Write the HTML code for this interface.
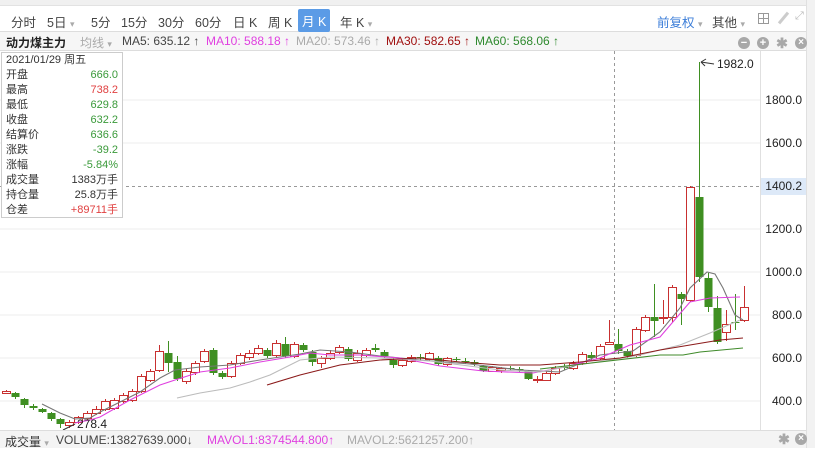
<!DOCTYPE html>
<html><head><meta charset="utf-8">
<style>
*{margin:0;padding:0;box-sizing:border-box}
body{width:815px;height:448px;overflow:hidden;background:#fff;font-family:"Liberation Sans","Noto Sans CJK SC",sans-serif;font-size:12px;color:#333;position:relative}
.topstrip{position:absolute;left:0;top:0;width:815px;height:6px;background:#f0f0f0;border-bottom:1px solid #e2e2e2}
.bar1{position:absolute;left:0;top:6px;width:806px;height:26px;background:#fff;border-bottom:1px solid #ddd}
.bar1 span{position:absolute;top:6px;font-size:12.5px;color:#444}
.bar2{position:absolute;left:0;top:32px;width:806px;height:19px;background:#f6f6f6;border-bottom:1px solid #ddd;white-space:nowrap}
.bar2 span{position:absolute;top:2px;font-size:12px}
.rscroll{position:absolute;left:806px;top:0;width:9px;height:448px;background:#f2f2f2;border-left:1px solid #e0e0e0}
.tip{position:absolute;left:1px;top:52px;width:122px;height:166px;background:#fff;border:1px solid #ccc;font-size:11px}
.tip div{height:15px;line-height:15px;padding:0 4px;position:relative}
.tip b{font-weight:normal;position:absolute;right:4px}
.g{color:#3a9a3a}.r{color:#e04040}
.bot{position:absolute;left:0;top:430px;width:806px;height:18px;background:#f4f4f4;border-top:1px solid #ddd;white-space:nowrap}
.bot span{position:absolute;top:2px;font-size:12px}
.ico{position:absolute;width:12px;height:12px;border-radius:50%;background:#a8a8a8;color:#fff;font-size:11px;line-height:12px;text-align:center;font-weight:bold}
</style></head><body>
<div class="topstrip"></div>
<div class="rscroll"></div>
<div class="bar1">
<span style="left:11px">分时</span>
<span style="left:47px">5日 <i style="font-style:normal;color:#aaa;font-size:9px">▾</i></span>
<span style="left:91px">5分</span>
<span style="left:121px">15分</span>
<span style="left:158px">30分</span>
<span style="left:195px">60分</span>
<span style="left:233px">日 K</span>
<span style="left:268px">周 K</span>
<span style="left:298px;top:3px;background:#5b9be6;color:#fff;padding:2px 4px;border-radius:2px">月 K</span>
<span style="left:340px">年 K <i style="font-style:normal;color:#aaa;font-size:9px">▾</i></span>
<span style="left:657px;color:#3b7dd8">前复权 <i style="font-style:normal;color:#aaa;font-size:9px">▾</i></span>
<span style="left:712px">其他 <i style="font-style:normal;color:#aaa;font-size:9px">▾</i></span>
<span style="left:758px;top:7px;width:11px;height:11px;border:1px solid #999;background:linear-gradient(#999,#999) 4px 0/1px 100% no-repeat,linear-gradient(#999,#999) 0 4px/100% 1px no-repeat"></span>
<span style="left:782px;top:5px;width:3px;height:14px;background:#ccc;transform:rotate(40deg)"></span>
<span style="left:795px;top:4px;color:#bbb;font-size:11px">⤢</span>
</div>
<div class="bar2">
<span style="left:6px;font-weight:bold;color:#222">动力煤主力</span>
<span style="left:80px;color:#aaa">均线 <i style="font-style:normal;font-size:9px">▾</i></span>
<span style="left:122px;color:#444">MA5: 635.12 ↑</span>
<span style="left:206px;color:#e040e0">MA10: 588.18 ↑</span>
<span style="left:296px;color:#aaa">MA20: 573.46 ↑</span>
<span style="left:386px;color:#a01010">MA30: 582.65 ↑</span>
<span style="left:475px;color:#2f8a2f">MA60: 568.06 ↑</span>
</div>
<div class="ico" style="left:738px;top:37px">−</div>
<div class="ico" style="left:757px;top:37px">+</div>
<div class="ico" style="left:776px;top:37px;background:none;color:#a8a8a8;font-size:14px">✱</div>
<div class="ico" style="left:795px;top:37px;font-size:10px">×</div>
<svg id="c" width="815" height="448" style="position:absolute;left:0;top:0" xmlns="http://www.w3.org/2000/svg"></svg>
<div class="tip">
<div>2021/01/29 周五</div>
<div>开盘<b class="g">666.0</b></div>
<div>最高<b class="r">738.2</b></div>
<div>最低<b class="g">629.8</b></div>
<div>收盘<b class="g">632.2</b></div>
<div>结算价<b class="g">636.6</b></div>
<div>涨跌<b class="g">-39.2</b></div>
<div>涨幅<b class="g">-5.84%</b></div>
<div>成交量<b>1383万手</b></div>
<div>持仓量<b>25.8万手</b></div>
<div>仓差<b class="r">+89711手</b></div>
</div>
<div class="bot">
<span style="left:5px">成交量 <i style="font-style:normal;color:#aaa;font-size:9px">▾</i></span>
<span style="left:56px;color:#444">VOLUME:13827639.000↓</span>
<span style="left:207px;color:#e040e0">MAVOL1:8374544.800↑</span>
<span style="left:347px;color:#aaa">MAVOL2:5621257.200↑</span>
</div>
<div class="ico" style="left:778px;top:433px;background:none;color:#a8a8a8;font-size:14px">✱</div>
<div class="ico" style="left:795px;top:433px;font-size:10px">×</div>
<script>
var s=document.getElementById('c'),h='';
[100,143,229,272,315,358,401].forEach(function(y){h+='<line x1="0" x2="760" y1="'+y+'" y2="'+y+'" stroke="#eeeeee"/>';});
h+='<line x1="760.5" x2="760.5" y1="51" y2="430" stroke="#e0e0e0"/>';
h+='<line x1="614.5" x2="614.5" y1="51" y2="430" stroke="#999" stroke-dasharray="3,3"/>';
h+='<line x1="0" x2="760" y1="186.5" y2="186.5" stroke="#999" stroke-dasharray="3,3"/>';
h+='<rect x="761" y="178" width="45" height="17" fill="#dde9f8"/>';
var lab=[[100,'1800.0'],[143,'1600.0'],[186,'1400.2'],[229,'1200.0'],[272,'1000.0'],[315,'800.0'],[358,'600.0'],[401,'400.0']];
lab.forEach(function(l){h+='<text x="802" y="'+(l[0]+4)+'" text-anchor="end" font-size="12" fill="#222" font-family="Liberation Sans">'+l[1]+'</text>';});
var d=[
['r',391,393,390,394],['g',393,397,392,399],['g',399,405,398,408],['g',406,408,404,410],['g',409,412,408,413],['g',413,419,412,421],['g',419,424,418,428],['r',422,425,420,428],['r',417,422,416,424],['r',413,418,411,420],
['r',409,413,406,415],['r',401,409,399,411],['r',400,408,398,410],['r',395,401,393,403],['r',391,400,389,402],['r',376,391,374,393],['r',371,380,369,382],['r',351,370,345,372],['g',353,363,341,372],['g',362,379,356,381],
['r',371,381,369,384],['r',363,372,361,375],['r',351,361,349,363],['g',350,373,348,375],['g',373,377,371,379],['r',363,376,361,378],['r',355,363,353,365],['r',353,357,350,360],['r',348,353,345,355],['g',350,356,348,358],
['r',343,355,340,357],['g',344,356,337,358],['r',344,356,342,358],['g',345,350,343,352],['g',352,362,350,366],['r',358,363,356,368],['r',353,358,350,360],['r',347,352,345,354],['g',349,359,347,361],['r',353,360,350,362],
['r',350,355,348,357],['g',348,350,344,352],['g',352,356,350,358],['g',360,365,358,368],['r',360,365,358,367],['r',357,361,355,363],['g',357,358,354,361],['r',353,359,352,361],['g',358,364,356,366],['r',358,364,357,366],
['g',359,360,357,362],['g',361,362,358,364],['g',362,364,360,366],['g',366,371,365,372],['r',367,371,366,372],['r',368,370,367,373],['g',368,369,366,371],['g',369,370,367,372],['g',371,379,370,380],['r',379,380,376,383],
['r',373,380,371,381],['r',368,373,366,375],['g',367,368,364,370],['r',363,368,361,370],['r',354,363,352,365],['g',355,358,352,360],['r',346,358,344,360],['r',342,344,320,345],['g',344,351,329,354],['g',351,356,349,358],
['r',329,355,327,357],['r',317,330,315,332],['g',317,321,284,337],['r',317,318,300,324],['r',287,317,285,322],['g',294,299,292,325],['r',187,300,186,302],['g',197,277,62,282],['g',278,307,273,312],['g',308,342,296,344],
['r',324,332,310,341],['g',322,323,294,330],['r',307,320,286,322]];
d.forEach(function(c,i){var x=6+9*i,col=c[0]=='r'?'#c83030':'#3f8f22';
h+='<line x1="'+(x+.5)+'" x2="'+(x+.5)+'" y1="'+c[3]+'" y2="'+c[4]+'" stroke="'+col+'"/>';
var hh=Math.max(1,c[2]-c[1]);
if(c[0]=='r')h+='<rect x="'+(x-3.5)+'" y="'+(c[1]+.5)+'" width="8" height="'+hh+'" fill="#fff" stroke="'+col+'"/>';
else h+='<rect x="'+(x-3.5)+'" y="'+c[1]+'" width="8" height="'+hh+'" fill="'+col+'"/>';});
function pl(p,col){h+='<polyline fill="none" stroke="'+col+'" stroke-width="1.1" points="'+p+'"/>';}
pl('42,404 60,413 75,419 90,418 100,412 120,402 140,392 160,378 175,370 200,367 230,365 260,360 300,354 320,350 350,352 380,356 420,360 470,364 520,370 560,372 600,355 633,351 660,332 680,308 690,288 707,272 715,274 723,288 735,315 743,320','#777');
pl('75,423 90,420 100,417 130,400 160,385 175,380 200,372 230,368 260,362 290,357 310,353 330,355 360,355 400,358 440,366 483,371 533,373 560,368 600,358 630,345 660,337 690,302 710,298 740,297','#e040e0');
pl('177,398 200,393 230,388 250,382 270,375 300,360 330,357 380,358 430,361 500,370 540,372 570,366 610,360 640,355 680,345 710,333 740,320','#bbbbbb');
pl('267,385 300,375 340,365 380,360 420,358 460,362 500,365 540,365 580,362 620,358 660,350 690,345 720,340 743,338','#8b1a1a');
pl('540,369 600,362 660,355 683,355 700,352 743,348','#3f8a2a');
h+='<line x1="701" y1="62" x2="714" y2="64" stroke="#333"/><path d="M701 62 L706 59 M701 62 L705 66" stroke="#333" fill="none"/>';
h+='<text x="717" y="68" font-size="12" fill="#222" font-family="Liberation Sans">1982.0</text>';
h+='<line x1="63" y1="430" x2="75" y2="424" stroke="#333"/>';
h+='<text x="77" y="428" font-size="12" fill="#222" font-family="Liberation Sans">278.4</text>';
s.innerHTML=h;
</script>
</body></html>
